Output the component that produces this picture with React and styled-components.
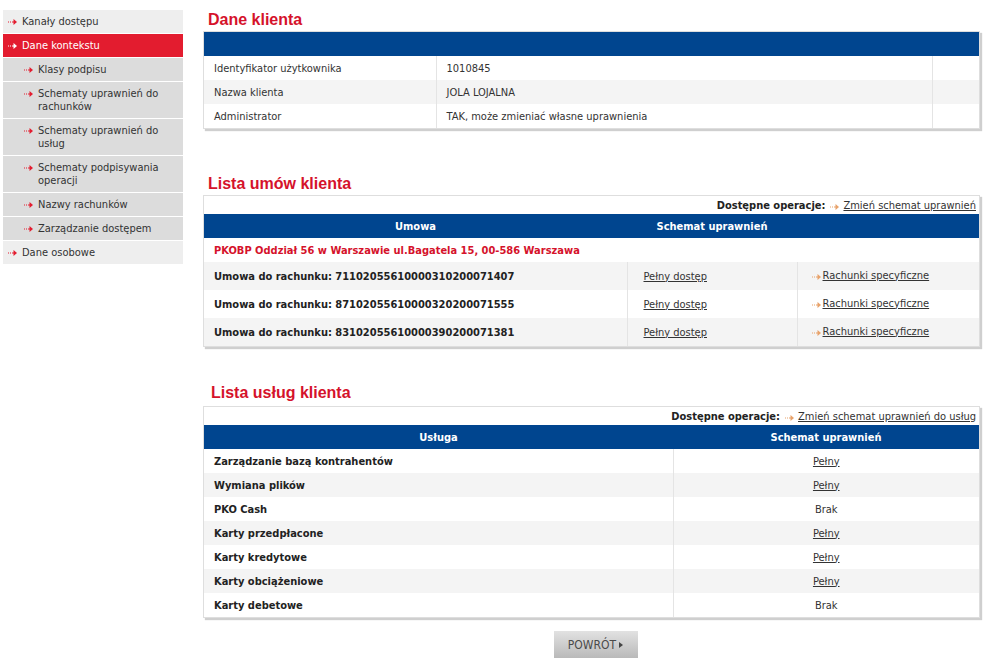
import React from 'react';
import styled, { createGlobalStyle } from 'styled-components';

const GlobalStyle = createGlobalStyle`
  body {
    margin: 0;
    background: #fff;
    font-family: "DejaVu Sans Condensed", "DejaVu Sans", sans-serif;
    font-stretch: condensed;
    font-size: 11px;
    color: #333;
  }
`;

const Page = styled.div`
  display: flex;
  align-items: flex-start;
  padding: 10px 0 0 3px;
`;

const Sidebar = styled.nav`
  width: 180px;
  flex-shrink: 0;
  display: flex;
  flex-direction: column;
`;

const MenuItem = styled.div`
  display: flex;
  align-items: flex-start;
  gap: 5px;
  padding: 5px 6px 5px ${p => (p.$sub ? 21 : 5)}px;
  line-height: 13px;
  min-height: 13px;
  background: ${p => (p.$active ? '#e31c2f' : p.$sub ? '#dcdcdc' : '#eeeeee')};
  color: ${p => (p.$active ? '#fff' : '#333')};
  border-bottom: 1px solid #fff;
`;

const ArrowBox = styled.span`
  flex-shrink: 0;
  display: inline-flex;
  margin-top: ${p => p.$top || 4}px;
`;

const Arrow = ({ color = '#e31c2f', top }) => (
  <ArrowBox $top={top}>
    <svg width="9" height="6" viewBox="0 0 9 6">
      <rect x="0" y="2.5" width="1" height="1" fill={color} />
      <rect x="2" y="2.5" width="1" height="1" fill={color} />
      <rect x="4" y="2.5" width="2" height="1" fill={color} />
      <path d="M5.5 0 L9 3 L5.5 6 Z" fill={color} />
    </svg>
  </ArrowBox>
);

const Main = styled.main`
  margin-left: 20px;
  width: 777px;
  display: flex;
  flex-direction: column;
`;

const Title = styled.h2`
  margin: ${p => p.$top || 0}px 0 ${p => p.$bottom || 1}px;
  padding-left: ${p => p.$indent || 5}px;
  font-family: "Liberation Sans", Arial, sans-serif;
  font-stretch: normal;
  font-size: 16px;
  line-height: 20px;
  font-weight: bold;
  color: #d5122b;
`;

const Box = styled.div`
  border: 1px solid #dedede;
  box-shadow: 2px 2px 1px #cfcfcf;
  background: #fff;
`;

const Table = styled.table`
  width: 100%;
  border-collapse: collapse;
  table-layout: fixed;
`;

const OpsRow = styled.div`
  display: flex;
  justify-content: flex-end;
  align-items: center;
  gap: 4px;
  height: 18px;
  padding-right: 3px;
  color: #222;
`;

const OpsLabel = styled.b`
  font-weight: bold;
  margin-right: 1px;
`;

const Link = styled.a`
  color: #333;
  text-decoration: underline;
  cursor: pointer;
`;

const Th = styled.th`
  background: #00458f;
  color: #fff;
  font-weight: bold;
  height: 24px;
  padding: 0;
  text-align: center;
`;

const Tr = styled.tr`
  background: ${p => (p.$alt ? '#f4f4f4' : '#fff')};
`;

const Td = styled.td`
  height: ${p => p.$h || 24}px;
  padding: 0 0 0 ${p => (p.$pad === undefined ? 10 : p.$pad)}px;
  text-align: ${p => p.$align || 'left'};
  font-weight: ${p => (p.$bold ? 'bold' : 'normal')};
  color: ${p => (p.$red ? '#d5122b' : p.$bold ? '#222' : '#333')};
  border-left: ${p => (p.$sep ? '1px solid #e4e4e4' : 'none')};
  white-space: nowrap;
`;

const LinkWrap = styled.span`
  display: inline-flex;
  align-items: center;
  gap: 2px;
`;

const ButtonRow = styled.div`
  display: flex;
  justify-content: center;
  padding: 13px 0 0 8px;
`;

const BackButton = styled.button`
  width: 84px;
  height: 27px;
  border: none;
  background: linear-gradient(#e2e2e2, #b9b9b9);
  color: #4a4a4a;
  font-family: "DejaVu Sans Condensed", "DejaVu Sans", sans-serif;
  font-stretch: condensed;
  font-size: 12px;
  display: inline-flex;
  align-items: center;
  justify-content: center;
  gap: 3px;
  cursor: pointer;
`;

const Tri = styled.span`
  width: 0;
  height: 0;
  border-top: 3px solid transparent;
  border-bottom: 3px solid transparent;
  border-left: 4px solid #444;
`;

const menu = [
  { label: 'Kanały dostępu' },
  { label: 'Dane kontekstu', active: true },
  { label: 'Klasy podpisu', sub: true },
  { label: ['Schematy uprawnień do', 'rachunków'], sub: true },
  { label: ['Schematy uprawnień do', 'usług'], sub: true },
  { label: ['Schematy podpisywania', 'operacji'], sub: true },
  { label: 'Nazwy rachunków', sub: true },
  { label: 'Zarządzanie dostępem', sub: true },
  { label: 'Dane osobowe' },
];

const umowy = [
  '71102055610000310200071407',
  '87102055610000320200071555',
  '83102055610000390200071381',
];

const uslugi = [
  ['Zarządzanie bazą kontrahentów', true],
  ['Wymiana plików', true],
  ['PKO Cash', false],
  ['Karty przedpłacone', true],
  ['Karty kredytowe', true],
  ['Karty obciążeniowe', true],
  ['Karty debetowe', false],
];

const App = () => (
  <>
    <GlobalStyle />
    <Page>
      <Sidebar>
        {menu.map((m, i) => (
          <MenuItem key={i} $sub={m.sub} $active={m.active}>
            <Arrow color={m.active ? '#fff' : '#e31c2f'} />
            <span>
              {Array.isArray(m.label) ? (
                <>
                  {m.label[0]}
                  <br />
                  {m.label[1]}
                </>
              ) : (
                m.label
              )}
            </span>
          </MenuItem>
        ))}
      </Sidebar>

      <Main>
        <Title>Dane klienta</Title>
        <Box>
          <Table>
            <colgroup>
              <col style={{ width: 232 }} />
              <col style={{ width: 496 }} />
              <col />
            </colgroup>
            <thead>
              <tr>
                <Th />
                <Th />
                <Th />
              </tr>
            </thead>
            <tbody>
              <Tr>
                <Td>Identyfikator użytkownika</Td>
                <Td $sep>1010845</Td>
                <Td $sep />
              </Tr>
              <Tr $alt>
                <Td>Nazwa klienta</Td>
                <Td $sep>JOLA LOJALNA</Td>
                <Td $sep />
              </Tr>
              <Tr>
                <Td>Administrator</Td>
                <Td $sep>TAK, może zmieniać własne uprawnienia</Td>
                <Td $sep />
              </Tr>
            </tbody>
          </Table>
        </Box>

        <Title $top={45}>Lista umów klienta</Title>
        <Box>
          <OpsRow>
            <OpsLabel>Dostępne operacje:</OpsLabel>
            <Arrow color="#e8a26a" top={0} />
            <Link>Zmień schemat uprawnień</Link>
          </OpsRow>
          <Table>
            <colgroup>
              <col style={{ width: 423 }} />
              <col style={{ width: 170 }} />
              <col />
            </colgroup>
            <thead>
              <tr>
                <Th>Umowa</Th>
                <Th>Schemat uprawnień</Th>
                <Th />
              </tr>
            </thead>
            <tbody>
              <Tr>
                <Td colSpan={3} $bold $red>
                  PKOBP Oddział 56 w Warszawie ul.Bagatela 15, 00-586 Warszawa
                </Td>
              </Tr>
              {umowy.map((nr, i) => (
                <Tr key={nr} $alt={i % 2 === 0}>
                  <Td $h={28} $bold>
                    Umowa do rachunku: {nr}
                  </Td>
                  <Td $h={28} $sep $pad={16}>
                    <Link>Pełny dostęp</Link>
                  </Td>
                  <Td $h={28} $sep $pad={14}>
                    <LinkWrap>
                      <Arrow color="#e8a26a" top={0} />
                      <Link>Rachunki specyficzne</Link>
                    </LinkWrap>
                  </Td>
                </Tr>
              ))}
            </tbody>
          </Table>
        </Box>

        <Title $top={36} $bottom={3} $indent={8}>
          Lista usług klienta
        </Title>
        <Box>
          <OpsRow>
            <OpsLabel>Dostępne operacje:</OpsLabel>
            <Arrow color="#e8a26a" top={0} />
            <Link>Zmień schemat uprawnień do usług</Link>
          </OpsRow>
          <Table>
            <colgroup>
              <col style={{ width: 469 }} />
              <col />
            </colgroup>
            <thead>
              <tr>
                <Th>Usługa</Th>
                <Th>Schemat uprawnień</Th>
              </tr>
            </thead>
            <tbody>
              {uslugi.map(([name, full], i) => (
                <Tr key={name} $alt={i % 2 === 1}>
                  <Td $bold>{name}</Td>
                  <Td $sep $pad={0} $align="center">
                    {full ? <Link>Pełny</Link> : 'Brak'}
                  </Td>
                </Tr>
              ))}
            </tbody>
          </Table>
        </Box>

        <ButtonRow>
          <BackButton>
            POWRÓT
            <Tri />
          </BackButton>
        </ButtonRow>
      </Main>
    </Page>
  </>
);

export default App;
